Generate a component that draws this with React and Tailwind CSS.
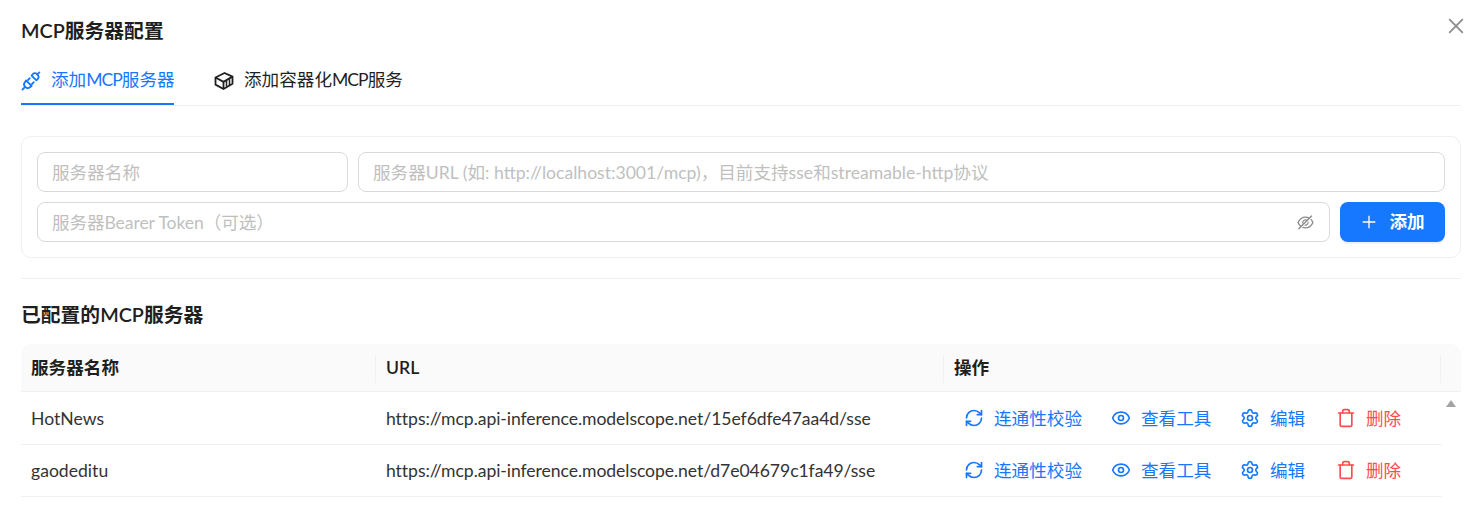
import React from "react";
import { AiOutlinePlus, AiOutlineClose, AiOutlineEyeInvisible } from "react-icons/ai";
import { RefreshCw, Settings, Trash, Eye } from "lucide-react";

function ApiIcon() {
  return (
    <svg width="20" height="20" viewBox="0 0 20 20" fill="none" stroke="currentColor" strokeWidth="1.8" strokeLinecap="round" strokeLinejoin="round" className="shrink-0">
      <path d="M1.5 18.5l2.4-2.4" />
      <path d="M5 9.4l5.6 5.6-1.6 1.2a3.2 3.2 0 0 1-4.4 0l-.6-.6a3.2 3.2 0 0 1 0-4.4z" />
      <path d="M7 9l1.8-1.8M11 13l1.8-1.8" />
      <path d="M10.6 4.6l4.8 4.8 1.2-1.4a3 3 0 0 0 0-4.2l-.6-.6a3 3 0 0 0-4.2 0z" />
      <path d="M16.4 3.4l2-2" />
    </svg>
  );
}

function BoxIcon() {
  return (
    <svg width="20" height="20" viewBox="0 0 20 20" fill="none" stroke="currentColor" strokeWidth="1.8" strokeLinejoin="round" className="shrink-0">
      <path d="M1.5 6.5L10.5 2l8 3.6v7.2L9.5 18l-8-4.4z" />
      <path d="M1.5 6.5l8 4.4V18M9.5 10.9l9-5.3" />
      <path d="M12.5 10v5.6M15.5 8.2v5.8" strokeWidth="1.5" />
    </svg>
  );
}

function Action({ icon, label, red, className }) {
  return (
    <span className={`flex items-center gap-[10px] ${red ? "text-[#ff4d4f]" : "text-[#1677ff]"} ${className}`}>
      {icon}
      <span className="pt-[2px]">{label}</span>
    </span>
  );
}

function Row({ name, url }) {
  return (
    <div className="flex h-[52.5px] items-center border-b border-[#f0f0f0] text-[#333333]">
      <div className="w-[355px] pl-[10px] pt-[2px]">{name}</div>
      <div className="w-[568px] pl-[10px] pt-[2px] tracking-[-0.07px]">{url}</div>
      <div className="flex flex-1 items-center pl-[20px]">
        <Action className="w-[147px]" icon={<RefreshCw size={20} strokeWidth={2} />} label="连通性校验" />
        <Action className="w-[129px]" icon={<Eye size={20} strokeWidth={2} />} label="查看工具" />
        <Action className="w-[96px]" icon={<Settings size={20} strokeWidth={2} />} label="编辑" />
        <Action red icon={<Trash size={20} strokeWidth={2} />} label="删除" />
      </div>
    </div>
  );
}

export default function App() {
  return (
    <div className="relative h-[506px] w-[1477px] overflow-hidden bg-white pl-[21px] pr-[16px] text-[17.6px] font-['Lato','Noto_Sans_CJK_SC',sans-serif] text-[#1f1f1f]">
      <button className="absolute right-[10px] top-[15px] text-[#8c8c8c]">
        <AiOutlineClose size={22} />
      </button>
      <h1 className="pt-[18px] pb-[2px] text-[19.8px] leading-[24px] font-semibold">MCP服务器配置</h1>
      <div className="mb-[30px] mt-[1px] flex h-[61px] items-stretch border-b border-[#f0f0f0]">
        <div className="flex w-[153px] items-center gap-[10px] whitespace-nowrap border-b-2 border-[#1677ff] pt-[13px] text-[#1677ff]">
          <ApiIcon />
          <span>添加<span className="tracking-[-1px]">MCP</span>服务器</span>
        </div>
        <div className="ml-[40px] flex items-center gap-[10px] whitespace-nowrap pt-[11px]">
          <BoxIcon />
          <span>添加容器化<span className="tracking-[-1px]">MCP</span>服务</span>
        </div>
      </div>
      <div className="flex h-[122px] flex-col gap-[10px] rounded-[10px] border border-[#f0f0f0] p-[15px]">
        <div className="flex gap-[10px]">
          <div className="flex h-[40px] w-[311px] items-center rounded-[8px] border border-[#d9d9d9] px-[14px] pt-[2px] text-[#bfbfbf]">服务器名称</div>
          <div className="flex h-[40px] flex-1 items-center rounded-[8px] border border-[#d9d9d9] px-[14px] pt-[2px] text-[#bfbfbf]">服务器URL (如: http://localhost:3001/mcp)，目前支持sse和streamable-http协议</div>
        </div>
        <div className="flex gap-[10px]">
          <div className="flex h-[40px] flex-1 items-center justify-between rounded-[8px] border border-[#d9d9d9] px-[14px] text-[#bfbfbf]">
            <span className="pt-[2px] tracking-[-0.1px]">服务器Bearer Token（可选）</span>
            <AiOutlineEyeInvisible size={19} className="text-[#8c8c8c]" />
          </div>
          <button className="flex h-[40px] w-[105px] items-center justify-center gap-[11px] rounded-[8px] bg-[#1677ff] font-semibold text-white shadow-[0_2px_0_rgba(5,145,255,0.1)]">
            <AiOutlinePlus size={18} />
            <span>添加</span>
          </button>
        </div>
      </div>
      <div className="mt-[20px] border-t border-[#f0f0f0]" />
      <h2 className="mt-[23px] text-[19.8px] leading-[24px] font-semibold">已配置的MCP服务器</h2>
      <div className="relative mt-[18px]">
        <div className="flex h-[48px] items-center rounded-t-[10px] border-b border-[#f0f0f0] bg-[#fafafa] font-semibold">
          <div className="relative h-[24px] w-[355px] pl-[10px] leading-[24px]">服务器名称<span className="absolute right-0 top-[-1px] h-[28px] w-px bg-[#f0f0f0]" /></div>
          <div className="relative h-[24px] w-[568px] pl-[10px] leading-[24px]">URL<span className="absolute right-0 top-[-1px] h-[28px] w-px bg-[#f0f0f0]" /></div>
          <div className="relative h-[24px] w-[497px] pl-[10px] leading-[24px]">操作<span className="absolute right-0 top-[-1px] h-[28px] w-px bg-[#f0f0f0]" /></div>
        </div>
        <div className="w-[1421px]">
          <Row name="HotNews" url="https://mcp.api-inference.modelscope.net/15ef6dfe47aa4d/sse" />
          <Row name="gaodeditu" url="https://mcp.api-inference.modelscope.net/d7e04679c1fa49/sse" />
        </div>
        <span className="absolute right-[5px] top-[56px] h-0 w-0 border-x-[5px] border-b-[7px] border-x-transparent border-b-[#a3a3a3]" />
      </div>
    </div>
  );
}
